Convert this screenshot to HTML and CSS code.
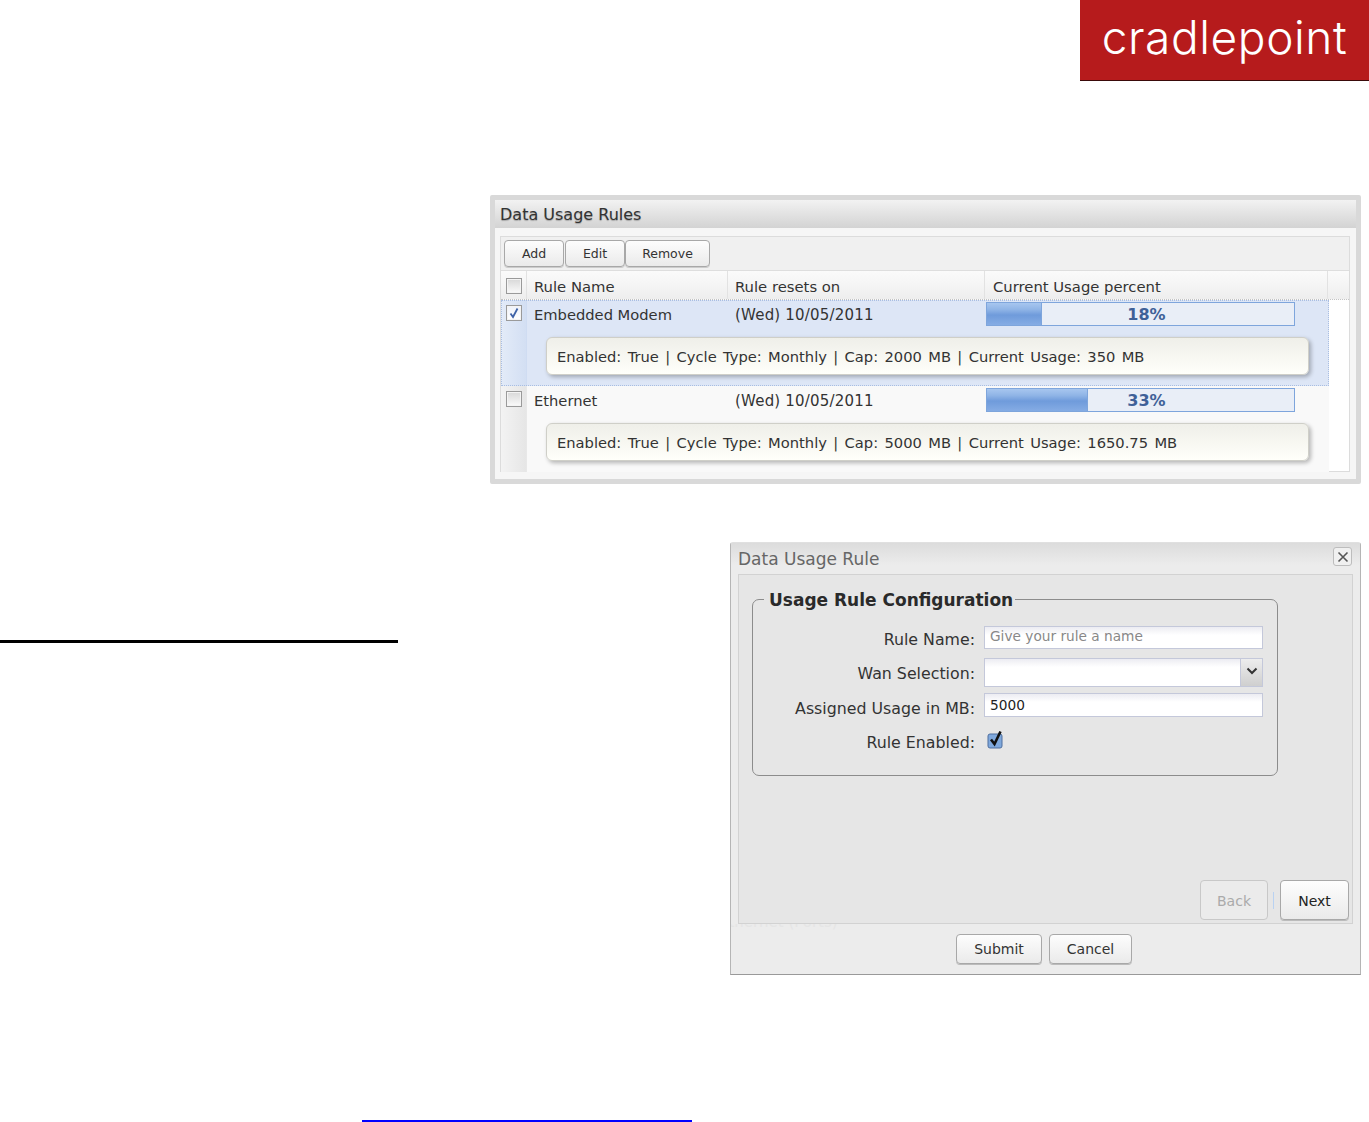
FILE: index.html
```html
<!DOCTYPE html>
<html lang="en">
<head>
<meta charset="utf-8">
<title>Data Usage Rules</title>
<link rel="stylesheet" href="styles.css">
</head>
<body>
<div class="page">
  <div class="logo"><span class="logo-text">cradlepoint</span></div>

  <section class="rules-window">
    <h2 class="rules-title">Data Usage Rules</h2>
    <div class="grid-panel">
      <div class="toolbar">
        <button class="tb-btn tb-add">Add</button>
        <button class="tb-btn tb-edit">Edit</button>
        <button class="tb-btn tb-remove">Remove</button>
      </div>
      <div class="grid-head">
        <div class="head-cell head-check"><span class="check"></span></div>
        <div class="head-cell">Rule Name</div>
        <div class="head-cell">Rule resets on</div>
        <div class="head-cell head-usage">Current Usage percent</div>
        <div class="head-cell head-end"></div>
      </div>
      <div class="grid-body">
        <div class="row row-selected">
          <div class="row-check"><span class="check check-on"><svg viewBox="0 0 14 14" width="14" height="14"><path d="M3.5 7.5 L6 11 L10.5 2.5" fill="none" stroke="#3f63a8" stroke-width="1.8"/></svg></span></div>
          <div class="row-main">
            <div class="row-cells">
              <div class="cell-name">Embedded Modem</div>
              <div class="cell-date">(Wed) 10/05/2011</div>
              <div class="bar"><div class="bar-fill bar-18"></div><span class="bar-label">18%</span></div>
            </div>
            <div class="pill">Enabled: True | Cycle Type: Monthly | Cap: 2000 MB | Current Usage: 350 MB</div>
          </div>
        </div>
        <div class="row">
          <div class="row-check"><span class="check"></span></div>
          <div class="row-main">
            <div class="row-cells">
              <div class="cell-name">Ethernet</div>
              <div class="cell-date">(Wed) 10/05/2011</div>
              <div class="bar"><div class="bar-fill bar-33"></div><span class="bar-label">33%</span></div>
            </div>
            <div class="pill">Enabled: True | Cycle Type: Monthly | Cap: 5000 MB | Current Usage: 1650.75 MB</div>
          </div>
        </div>
      </div>
    </div>
  </section>

  <div class="rule-black"></div>

  <section class="dialog">
    <header class="dialog-head">
      <h2 class="dialog-title">Data Usage Rule</h2>
      <span class="close"><svg viewBox="0 0 18 18" width="18" height="18"><path d="M4.5 4.5 L13.5 13.5 M13.5 4.5 L4.5 13.5" stroke="#555" stroke-width="1.6" fill="none"/></svg></span>
    </header>
    <div class="wizard">
      <fieldset class="config">
        <legend class="config-legend">Usage Rule Configuration</legend>
        <div class="form-row form-name">
          <label class="form-label">Rule Name:</label>
          <div class="field field-name placeholder">Give your rule a name</div>
        </div>
        <div class="form-row form-wan">
          <label class="form-label">Wan Selection:</label>
          <div class="field field-wan"><span class="select-arrow"><svg viewBox="0 0 12 8" width="12" height="8"><path d="M1.5 1.5 L6 6 L10.5 1.5" fill="none" stroke="#333" stroke-width="2"/></svg></span></div>
        </div>
        <div class="form-row form-usage">
          <label class="form-label">Assigned Usage in MB:</label>
          <div class="field field-usage">5000</div>
        </div>
        <div class="form-row form-enabled">
          <label class="form-label">Rule Enabled:</label>
          <span class="big-check"><svg viewBox="0 0 17 19" width="17" height="19"><rect x="1" y="4" width="14" height="14" rx="2" fill="#7fa8dc" stroke="#4f6f9f"/><path d="M4 9.5 L7.5 14 L13.5 1.5" fill="none" stroke="#111" stroke-width="2.6"/></svg></span>
        </div>
      </fieldset>
      <div class="wizard-nav">
        <button class="nav-btn nav-back">Back</button>
        <span class="nav-sep"></span>
        <button class="nav-btn nav-next">Next</button>
      </div>
    </div>
    <footer class="dialog-foot">
      <span class="ghost-text">Ethernet (Ports)</span>
      <button class="foot-btn foot-submit">Submit</button>
      <button class="foot-btn foot-cancel">Cancel</button>
    </footer>
  </section>

  <div class="rule-blue"></div>
</div>
</body>
</html>
```
FILE: styles.css
```css
* { box-sizing: border-box; }
html, body { margin: 0; padding: 0; background: #fff; }
body { font-family: "DejaVu Sans", sans-serif; color: #333; }
.page { position: relative; width: 1369px; height: 1122px; overflow: hidden; background: #fff; }

/* placed items on the document page */
.logo { position: absolute; left: 1080px; top: 0; width: 289px; height: 81px; background: #b61b1c; border-bottom: 1px solid #3a0a0a; display: flex; justify-content: center; }
.logo-text { font-family: "Inter", sans-serif; font-weight: 300; font-size: 46px; line-height: 75px; color: #fff; letter-spacing: 0.6px; }
.rule-black { position: absolute; left: 0; top: 640px; width: 398px; height: 3px; background: #000; }
.rule-blue { position: absolute; left: 362px; top: 1120px; width: 330px; height: 2px; background: #0000ff; }

/* rules window */
.rules-window { position: absolute; left: 490px; top: 195px; width: 871px; height: 289px; border: 5px solid #d9d9d9; background: #f6f6f6; border-radius: 2px; display: flex; flex-direction: column; }
.rules-title { margin: 0; height: 28px; padding: 0 5px; font-size: 16px; line-height: 29px; font-weight: 400; color: #333; background: linear-gradient(#f2f2f2, #d3d3d3); text-shadow: 0 1px 1px rgba(0,0,0,.25); }
.grid-panel { margin: 8px 6px 7px 5px; flex: 1; border: 1px solid #dcdcdc; background: #fff; display: flex; flex-direction: column; min-height: 0; }
.toolbar { height: 34px; flex: none; padding: 3px 0 0 3px; display: flex; align-items: flex-start; background: #f0f0f0; border-bottom: 1px solid #dedede; }
.tb-btn, .nav-btn, .foot-btn { font-family: "DejaVu Sans", sans-serif; color: #333; padding: 0; background: linear-gradient(#fdfdfd, #eaeaea); border: 1px solid #a8a8a8; border-radius: 4px; cursor: default; }
.tb-btn { height: 27px; font-size: 12.5px; box-shadow: 0 1px 0 #ccc; }
.tb-add { width: 60px; }
.tb-edit { width: 60px; margin-left: 1px; }
.tb-remove { width: 85px; margin-left: 0; }

.grid-head { flex: none; height: 29px; display: grid; grid-template-columns: 26px 201px 257px 343px 1fr; background: linear-gradient(#fbfbfb, #eeeeee); border-bottom: 1px dotted #c4c4c4; font-size: 14.8px; }
.head-cell { padding: 7px 0 0 7px; line-height: 17px; border-right: 1px solid #e2e2e2; }
.head-usage { padding-left: 8px; }
.head-end { border-right: 0; }
.head-check { padding: 7px 0 0 5px; }

.check { display: block; width: 16px; height: 16px; border: 1px solid #9a9a9a; background: linear-gradient(#d8d8d8, #fafafa); box-shadow: inset 0 0 0 1px #f4f4f4; }
.check-on { background: linear-gradient(#eef2fa, #fff); }
.check svg { display: block; }

.grid-body { flex: 1; min-height: 0; display: flex; flex-direction: column; width: 828px; }
.row { height: 86px; display: flex; flex: none; background: #f9f9f9; }
.row-selected { background: #dde6f6; outline: 1px dotted #a9bee2; outline-offset: -1px; }
.row-check { width: 26px; flex: none; padding: 5px 0 0 5px; background: linear-gradient(90deg, #f3f3f3, #e6e6e6); border-right: 1px solid #e8e8e8; }
.row-selected .row-check { background: linear-gradient(90deg, #e3ebf8, #d3dff3); border-right-color: #cfdcf2; }
.row-main { flex: 1; min-width: 0; display: flex; flex-direction: column; }
.row-cells { height: 37px; flex: none; display: grid; grid-template-columns: 201px 258px 309px; font-size: 14.7px; line-height: 17px; }
.cell-name { padding: 6px 0 0 7px; }
.cell-date { padding: 7px 0 0 7px; font-size: 15px; letter-spacing: 0.2px; }
.bar { position: relative; margin-top: 2px; height: 24px; border: 1px solid #7ea5dc; background: #e9eef7; }
.bar-fill { height: 100%; background: linear-gradient(#a7c6ef 0, #8fb4e6 30%, #6f9bdb 55%, #85ace4 100%); border-right: 1px solid #7ea5dc; }
.bar-18 { width: 18%; }
.bar-33 { width: 33%; }
.bar-label { position: absolute; inset: 0; padding-left: 12px; text-align: center; font-weight: 700; font-size: 16px; line-height: 23px; color: #3f6198; }
.pill { margin-left: 19px; width: 763px; height: 38px; padding-left: 10px; border: 1px solid #cfcfc8; border-radius: 6px; background: linear-gradient(#efefe9, #fffffa); box-shadow: 2px 2px 4px rgba(0,0,0,.28); font-size: 14.7px; word-spacing: 1.7px; line-height: 37px; color: #333; white-space: nowrap; }

/* dialog */
.dialog { position: absolute; left: 730px; top: 542px; width: 631px; height: 433px; background: #ececec; border: 1px solid #b5b5b5; border-top-color: #e0e0e0; border-bottom-color: #999; border-radius: 3px 3px 0 0; display: flex; flex-direction: column; }
.dialog-head { height: 31px; flex: none; padding: 0 8px 0 7px; display: flex; justify-content: space-between; align-items: flex-start; background: linear-gradient(#dcdcdc, #ececec 22px); }
.dialog-title { margin: 0; font-size: 17px; font-weight: 400; line-height: 32px; color: #666; }
.close { margin-top: 4px; width: 19px; height: 19px; border: 1px solid #bdbdbd; border-radius: 3px; background: #f0f0f0; }
.close svg { display: block; }
.wizard { position: relative; height: 350px; flex: none; margin: 0 7px; background: #e6e6e6; border: 1px solid #d2d2d2; padding: 0 0 0 13px; }
.config { margin: 14px 0 0 0; padding: 0; width: 526px; height: 187px; border: 1px solid #8c8c8c; border-radius: 7px; min-width: 0; }
.config-legend { margin-left: 11px; padding: 0 2px 0 5px; font-size: 17px; line-height: 20px; font-weight: 700; color: #2a2a2a; transform: translateY(1px); }
.form-row { display: flex; align-items: flex-start; }
.form-label { width: 222px; flex: none; text-align: right; font-size: 15.8px; color: #333; line-height: 18px; }
.field { margin-left: 9px; width: 279px; background: linear-gradient(#ececf2, #fff 8px); border: 1px solid #c4c8da; font-size: 13.7px; line-height: 18px; padding-left: 5px; }
.form-name { margin-top: 17px; }
.form-name .form-label { margin-top: 5px; }
.field-name { height: 23px; }
.placeholder { color: #888; }
.form-wan { margin-top: 9px; }
.form-wan .form-label { margin-top: 7px; }
.field-wan { height: 29px; padding: 0; display: flex; justify-content: flex-end; }
.select-arrow { width: 22px; height: 100%; display: flex; align-items: center; justify-content: center; background: linear-gradient(#ededed, #cfcfcf); border-left: 1px solid #c4c8da; }
.select-arrow svg { display: block; margin-top: -3px; }
.form-usage { margin-top: 6px; }
.form-usage .form-label { margin-top: 7px; }
.field-usage { height: 24px; line-height: 22px; color: #222; }
.form-enabled { margin-top: 14px; }
.form-enabled .form-label { margin-top: 2px; }
.big-check { margin-left: 12px; margin-top: -2px; display: block; height: 19px; }
.big-check svg { display: block; }
.wizard-nav { position: absolute; right: 3px; top: 305px; display: flex; align-items: center; }
.nav-btn { width: 69px; height: 40px; padding-top: 2px; font-size: 14px; box-shadow: 0 1px 0 #bbb; }
.nav-back { width: 68px; color: #aaa; background: #ebebeb; border-color: #c8c8c8; box-shadow: none; }
.nav-sep { width: 1px; height: 17px; margin: 0 6px 0 5px; background: #b9d2f2; }
.nav-next { color: #222; }
.dialog-foot { position: relative; overflow: hidden; flex: 1; display: flex; padding: 10px 0 0 225px; align-items: flex-start; background: #ececec; }
.ghost-text { position: absolute; left: -12px; top: -11px; font-size: 15px; line-height: 18px; color: #e5e5e5; white-space: nowrap; }
.foot-btn { height: 30px; font-size: 14px; box-shadow: 0 1px 0 #bbb; }
.foot-submit { width: 86px; }
.foot-cancel { width: 83px; margin-left: 7px; }
```
